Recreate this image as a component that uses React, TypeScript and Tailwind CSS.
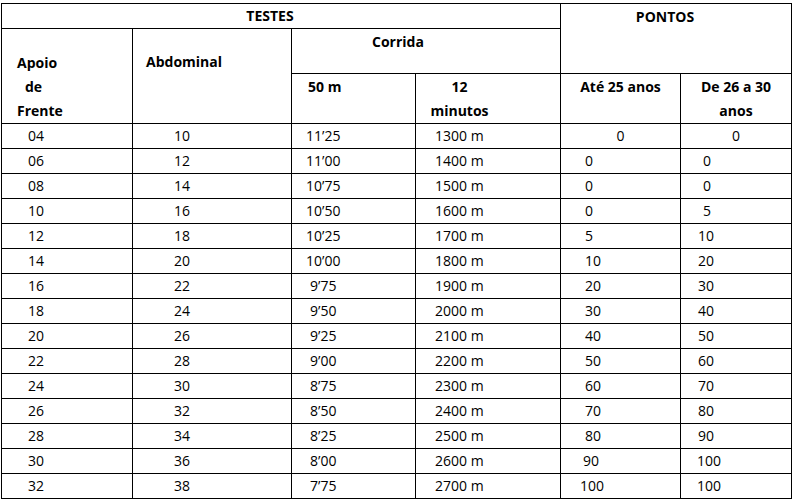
const rows: [string, string, string, string, string, string][] = [
  ["04", "10", "11’25", "1300 m", "0", "0"],
  ["06", "12", "11’00", "1400 m", "0", "0"],
  ["08", "14", "10’75", "1500 m", "0", "0"],
  ["10", "16", "10’50", "1600 m", "0", "5"],
  ["12", "18", "10’25", "1700 m", "5", "10"],
  ["14", "20", "10’00", "1800 m", "10", "20"],
  ["16", "22", "9’75", "1900 m", "20", "30"],
  ["18", "24", "9’50", "2000 m", "30", "40"],
  ["20", "26", "9’25", "2100 m", "40", "50"],
  ["22", "28", "9’00", "2200 m", "50", "60"],
  ["24", "30", "8’75", "2300 m", "60", "70"],
  ["26", "32", "8’50", "2400 m", "70", "80"],
  ["28", "34", "8’25", "2500 m", "80", "90"],
  ["30", "36", "8’00", "2600 m", "90", "100"],
  ["32", "38", "7’75", "2700 m", "100", "100"],
];

const cell = "border-r border-b border-black flex items-center pb-[2px]";

function ptsPad(v: string) {
  if (v === "100") return "pl-[19px]";
  if (v === "90") return "pl-[22px]";
  return "pl-[24px]";
}

function agePad(v: string) {
  if (v.length === 1) return "pl-[22px]";
  if (v === "100") return "pl-[16px]";
  return "pl-[17px]";
}

const App = () => {
  return (
    <div className="w-[796px] h-[501px] bg-white text-black pt-[3px] pl-[1px] font-['Open_Sans',sans-serif] text-[14px]">
      <div className="grid grid-cols-[131px_159px_124px_145px_120px_111px] grid-rows-[25px_45px_50px_repeat(15,25px)] w-[791px] border-l border-t border-black">
        <div className={`${cell} col-span-4 justify-center pr-[22px] font-bold`}>TESTES</div>
        <div className="border-r border-b border-black col-span-2 row-span-2 flex justify-center pr-[22px] pt-[2px] font-bold">PONTOS</div>

        <div className="border-r border-b border-black row-span-2 flex flex-col justify-end pl-[15px] font-bold leading-[24px]">
          <span>Apoio</span>
          <span className="pl-[8px]">de</span>
          <span>Frente</span>
        </div>
        <div className="border-r border-b border-black row-span-2 pl-[13px] pt-[22px] font-bold">Abdominal</div>
        <div className="border-r border-b border-black col-span-2 pl-[80px] pt-[2px] font-bold">Corrida</div>

        <div className="border-r border-b border-black pl-[16px] pt-[1px] font-bold leading-[24px]">50 m</div>
        <div className="border-r border-b border-black pt-[1px] font-bold leading-[24px]">
          <div className="w-[87px] text-center">12</div>
          <div className="w-[87px] text-center">minutos</div>
        </div>
        <div className="border-r border-b border-black pt-[1px] font-bold leading-[24px] text-center">Até 25 anos</div>
        <div className="border-r border-b border-black pt-[1px] font-bold leading-[24px] text-center">
          De 26 a 30
          <br />
          anos
        </div>

        {rows.map((r, i) => (
          <div key={i} className="contents">
            <div className={`${cell} pl-[26px]`}>{r[0]}</div>
            <div className={`${cell} pl-[41px]`}>{r[1]}</div>
            <div className={`${cell} ${r[2].length === 4 ? "pl-[18px]" : "pl-[14px]"}`}>{r[2]}</div>
            <div className={`${cell} pl-[19px]`}>{r[3]}</div>
            <div className={`${cell} ${i === 0 ? "justify-center" : ptsPad(r[4])}`}>{r[4]}</div>
            <div className={`${cell} ${i === 0 ? "justify-center" : agePad(r[5])}`}>{r[5]}</div>
          </div>
        ))}
      </div>
    </div>
  );
};

export default App;
